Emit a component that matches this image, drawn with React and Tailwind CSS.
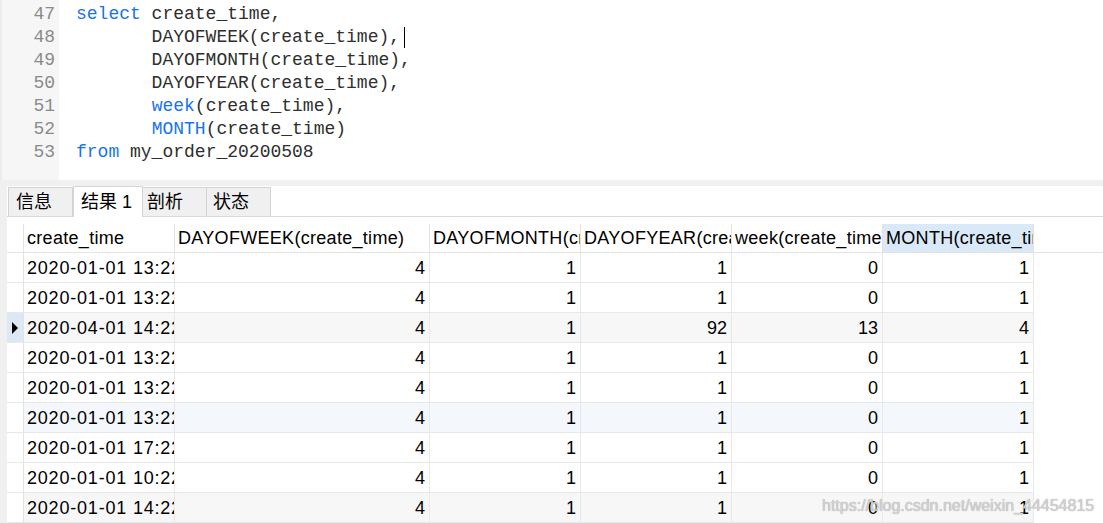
import React from "react";

const KW = "text-[#1874e8]";

function CodeLine({ n, children }) {
  return (
    <div className="flex h-[23px] items-center">
      <div className="w-[59px] shrink-0 pr-[4px] text-right text-[#8a8a8a]">{n}</div>
      <div className="pl-[17px] whitespace-pre text-[#2e2e2e]">{children}</div>
    </div>
  );
}

const cols = [
  { name: "create_time", w: "w-[151px]", left: true },
  { name: "DAYOFWEEK(create_time)", w: "w-[255px]" },
  { name: "DAYOFMONTH(create_time)", w: "w-[151px]" },
  { name: "DAYOFYEAR(create_time)", w: "w-[151px]" },
  { name: "week(create_time)", w: "w-[151px]" },
  { name: "MONTH(create_time)", w: "w-[151px]", hl: true },
];

const rows = [
  { t: "2020-01-01 13:22:35", v: [4, 1, 1, 0, 1] },
  { t: "2020-01-01 13:22:35", v: [4, 1, 1, 0, 1] },
  { t: "2020-04-01 14:22:35", v: [4, 1, 92, 13, 4], bg: "bg-[#f7f7f7]", sel: true },
  { t: "2020-01-01 13:22:35", v: [4, 1, 1, 0, 1] },
  { t: "2020-01-01 13:22:35", v: [4, 1, 1, 0, 1] },
  { t: "2020-01-01 13:22:35", v: [4, 1, 1, 0, 1], bg: "bg-[#f4f8fc]" },
  { t: "2020-01-01 17:22:35", v: [4, 1, 1, 0, 1] },
  { t: "2020-01-01 10:22:35", v: [4, 1, 1, 0, 1] },
  { t: "2020-01-01 14:22:35", v: [4, 1, 1, 0, 1], bg: "bg-[#f7f7f7]" },
];

const tabs = [
  { label: "信息", w: "w-[65px]", pl: "pl-[7px]" },
  { label: "结果 1", w: "w-[70px]", pl: "pl-[7px]", active: true },
  { label: "剖析", w: "w-[64px]", pl: "pl-[4px]" },
  { label: "状态", w: "w-[64px]", pl: "pl-[6px]" },
];

export default function App() {
  return (
    <div className="relative w-[1103px] h-[523px] overflow-hidden bg-white">
      {/* Editor */}
      <div className="relative h-[180px] flex font-['Liberation_Mono',monospace] text-[18px]">
        <div className="absolute left-0 top-0 h-full w-[59px] bg-[#f6f6f6] border-l-[2px] border-[#ececec]" />
        <div className="relative pt-[3px]">
          <CodeLine n="47">
            <span className={KW}>select</span> create_time,
          </CodeLine>
          <CodeLine n="48">
            {"       DAYOFWEEK(create_time),"}
            <span className="ml-[4px] inline-block w-[1px] h-[21px] bg-black align-middle" />
          </CodeLine>
          <CodeLine n="49">{"       DAYOFMONTH(create_time),"}</CodeLine>
          <CodeLine n="50">{"       DAYOFYEAR(create_time),"}</CodeLine>
          <CodeLine n="51">
            {"       "}
            <span className={KW}>week</span>(create_time),
          </CodeLine>
          <CodeLine n="52">
            {"       "}
            <span className={KW}>MONTH</span>(create_time)
          </CodeLine>
          <CodeLine n="53">
            <span className={KW}>from</span> my_order_20200508
          </CodeLine>
        </div>
      </div>

      {/* separator band */}
      <div className="h-[6px] bg-[#f0f0f0]" />

      {/* lower pane */}
      <div className="flex h-[337px]">
        <div className="w-[7px] shrink-0 bg-[#f0f0f0]" />
        <div className="flex-1 flex flex-col">
          {/* tabs */}
          <div className="h-[31px] flex items-end border-b border-[#d9d9d9] pl-[1px] font-['Liberation_Sans','Noto_Sans_CJK_SC',sans-serif] text-[18px] text-black">
            {tabs.map((t) =>
              t.active ? (
                <div
                  key={t.label}
                  className={`${t.w} ${t.pl} h-[31px] -mb-[1px] bg-white border border-b-0 border-[#d4d4d4] flex items-center leading-none`}
                >
                  {t.label}
                </div>
              ) : (
                <div
                  key={t.label}
                  className={`${t.w} ${t.pl} h-[29px] bg-[#f0f0f0] border border-b-0 border-l-0 first:border-l border-[#d4d4d4] flex items-center leading-none`}
                >
                  {t.label}
                </div>
              )
            )}
          </div>
          <div className="h-[7px]" />
          {/* grid */}
          <div className="font-['Liberation_Sans',sans-serif] text-[18px] text-black leading-none">
            <div className="flex h-[29px] border-b border-[#e3e3e3]">
              <div className="w-[17px] shrink-0 border-r border-[#e3e3e3]" />
              {cols.map((c) => (
                <div
                  key={c.name}
                  className={`${c.w} shrink-0 border-r border-[#e3e3e3] overflow-hidden whitespace-nowrap flex items-center pl-[3px] tracking-[0.3px] ${
                    c.hl ? "bg-[#d9e9f7]" : ""
                  }`}
                >
                  {c.name}
                </div>
              ))}
            </div>
            {rows.map((r, i) => (
              <div key={i} className={`flex w-[1027px] h-[30px] border-b border-[#e8e8e8] ${r.bg || ""}`}>
                <div
                  className={`w-[17px] shrink-0 border-r border-[#e3e3e3] flex items-center justify-center ${
                    r.sel ? "bg-[#dce9f5]" : "bg-white"
                  }`}
                >
                  {r.sel && (
                    <svg width="7" height="12" viewBox="0 0 7 12">
                      <polygon points="0,0 6,6 0,12" fill="#000" />
                    </svg>
                  )}
                </div>
                <div className="w-[151px] shrink-0 border-r border-[#e8e8e8] overflow-hidden whitespace-nowrap flex items-center pl-[3px] tracking-[0.8px]">
                  {r.t}
                </div>
                {r.v.map((v, j) => (
                  <div
                    key={j}
                    className={`${cols[j + 1].w} shrink-0 border-r border-[#e8e8e8] flex items-center justify-end pr-[4px]`}
                  >
                    {v}
                  </div>
                ))}
              </div>
            ))}
          </div>
        </div>
      </div>

      {/* watermark */}
      <div className="absolute left-[822px] top-[494px] font-['Liberation_Sans',sans-serif] text-[16px] text-[#d2d2d2] whitespace-nowrap [text-shadow:0_0_1px_#9a9a9a]">
        https://blog.csdn.net/weixin_44454815
      </div>
    </div>
  );
}
